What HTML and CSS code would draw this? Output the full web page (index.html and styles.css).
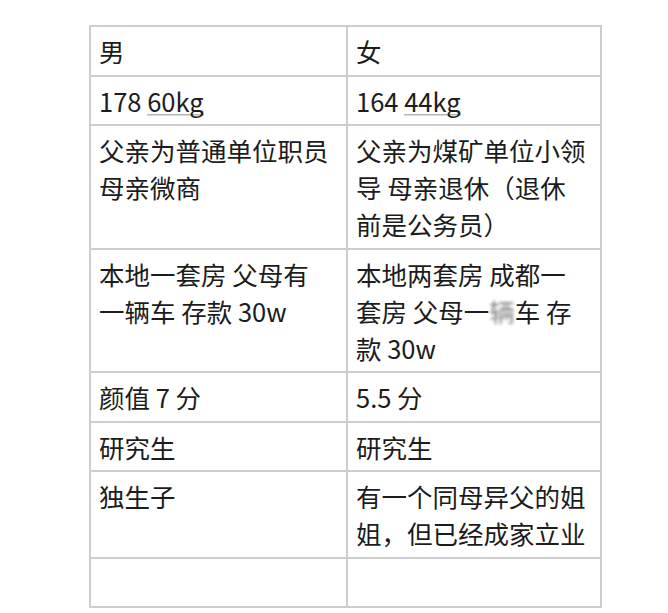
FILE: index.html
```html
<!DOCTYPE html>
<html lang="zh-CN">
<head>
<meta charset="utf-8">
<link rel="stylesheet" href="styles.css">
</head>
<body>
<div class="page">
<table class="cmp">
<colgroup><col class="c1"><col class="c2"></colgroup>
<tr><td>男</td><td>女</td></tr>
<tr><td>178 <span class="dl">60kg</span></td><td>164 <span class="dl">44kg</span></td></tr>
<tr><td>父亲为普通单位职员<br>母亲微商</td><td>父亲为煤矿单位小领<br>导 母亲退休（退休<br>前是公务员）</td></tr>
<tr><td>本地一套房 父母有<br>一辆车 存款 30w</td><td>本地两套房 成都一<br>套房 父母一<span class="blur">辆</span>车 存<br>款 30w</td></tr>
<tr><td>颜值 7 分</td><td>5.5 分</td></tr>
<tr><td>研究生</td><td>研究生</td></tr>
<tr><td>独生子</td><td>有一个同母异父的姐<br>姐，但已经成家立业</td></tr>
<tr><td>&nbsp;</td><td>&nbsp;</td></tr>
</table>
</div>
</body>
</html>
```
FILE: styles.css
```css
html, body {
  margin: 0;
  padding: 0;
  background: #ffffff;
}
.page {
  padding: 25px 0 0 89px;
}
.cmp {
  border-collapse: collapse;
  width: 511px;
  table-layout: fixed;
  font-family: "Noto Sans CJK SC", sans-serif;
  font-size: 25.5px;
  line-height: 37px;
  color: #1c1c1c;
}
.c1 { width: 257px; }
.c2 { width: 254px; }
.cmp td {
  border: 2px solid #cdcdcd;
  padding: 5px 6px 5.5px 8px;
  vertical-align: top;
  white-space: nowrap;
}
.dl {
  background-image: linear-gradient(#b5b5b5, #b5b5b5);
  background-size: 100% 1.5px;
  background-position: 0 32px;
  background-repeat: no-repeat;
}
.blur {
  filter: blur(1.6px);
  opacity: 0.55;
}
```
